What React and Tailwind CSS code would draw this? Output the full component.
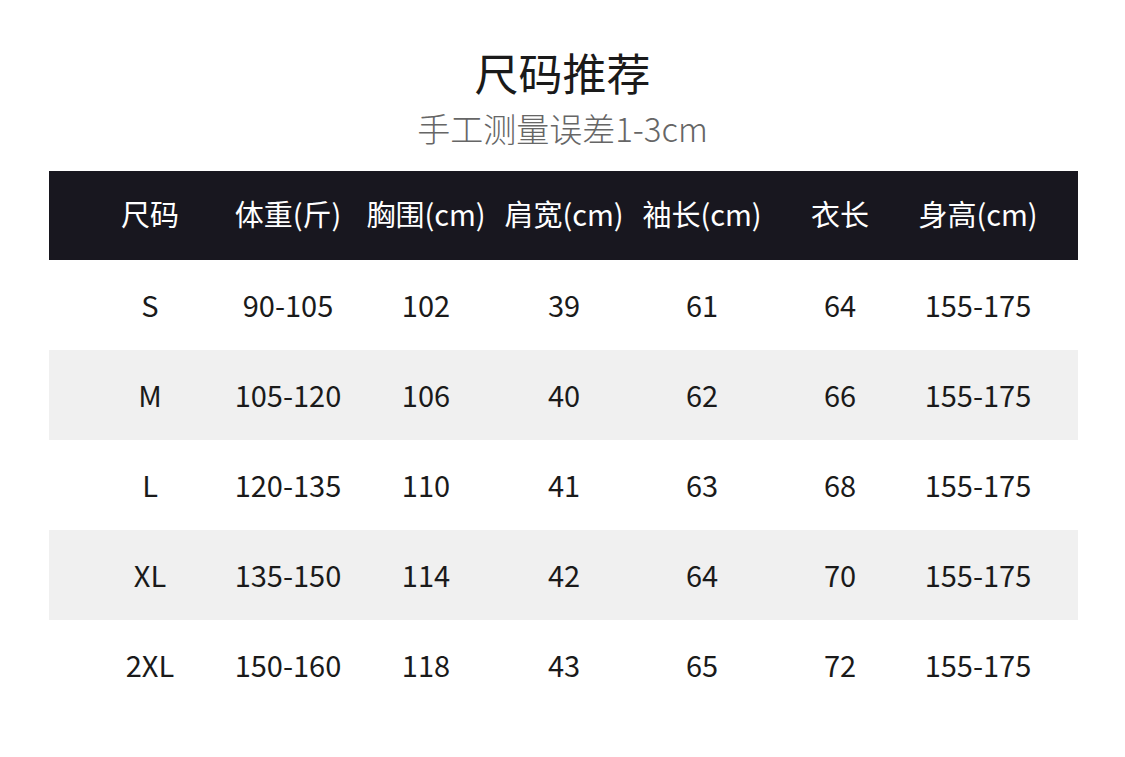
const headers = ["尺码", "体重(斤)", "胸围(cm)", "肩宽(cm)", "袖长(cm)", "衣长", "身高(cm)"];

const rows = [
  ["S", "90-105", "102", "39", "61", "64", "155-175"],
  ["M", "105-120", "106", "40", "62", "66", "155-175"],
  ["L", "120-135", "110", "41", "63", "68", "155-175"],
  ["XL", "135-150", "114", "42", "64", "70", "155-175"],
  ["2XL", "150-160", "118", "43", "65", "72", "155-175"],
];

export default function App() {
  return (
    <div
      className="w-[1125px] h-[757px] bg-white overflow-hidden"
      style={{ fontFamily: '"Noto Sans CJK SC", "Noto Sans", sans-serif' }}
    >
      <div className="pt-[47px] flex flex-col items-center">
        <h1 className="h-[50px] flex items-center text-[44px] leading-none text-[#1a1a1a]">尺码推荐</h1>
        <p className="mt-[12px] h-[38px] flex items-center text-[33px] leading-none font-light text-[#666666]">手工测量误差1-3cm</p>
      </div>

      <div className="mt-[24px] ml-[49px] w-[1029px]">
        <div className="h-[89px] pb-[5px] bg-[#18171f] pl-[32px] grid grid-cols-[repeat(7,138px)] items-center text-white text-[29px] leading-none">
          {headers.map((h) => (
            <div key={h} className="text-center whitespace-nowrap">{h}</div>
          ))}
        </div>
        {rows.map((r, i) => (
          <div
            key={r[0]}
            className={`h-[90px] pb-[2px] pl-[32px] grid grid-cols-[repeat(7,138px)] items-center text-[#1a1a1a] text-[29px] leading-none ${
              i % 2 === 1 ? "bg-[#f0f0f0]" : "bg-white"
            }`}
          >
            {r.map((c, j) => (
              <div key={j} className="text-center whitespace-nowrap">{c}</div>
            ))}
          </div>
        ))}
      </div>
    </div>
  );
}
